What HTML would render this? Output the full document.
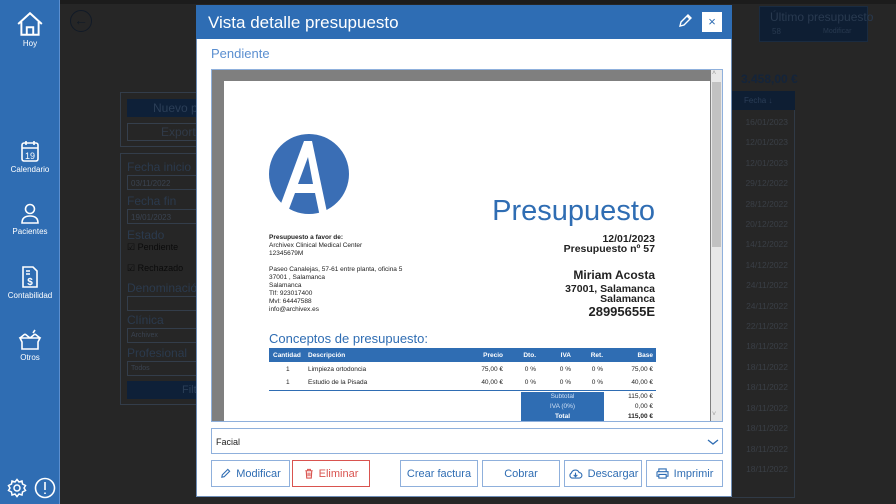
<!DOCTYPE html>
<html><head><meta charset="utf-8"><style>
*{margin:0;padding:0;box-sizing:border-box}
body{width:896px;height:504px;overflow:hidden;background:#262626;font-family:"Liberation Sans",sans-serif;position:relative}
.a{position:absolute;white-space:nowrap}
.side{left:0;top:0;width:60px;height:504px;background:#2f6db3;border-right:1px solid #5b8fd0}
.side .it{position:absolute;left:0;width:60px;text-align:center;color:#fff;font-size:8px}
.dk{color:#2b3a4d}
.btn{position:absolute;top:460px;height:27px;border:1px solid #8fb0dc;color:#2f6db3;font-size:11px;display:flex;align-items:center;justify-content:center;gap:5px;background:#fff}
.doc{font-family:"Liberation Sans",sans-serif;color:#222}
table{border-collapse:collapse}
td{white-space:nowrap}
</style></head><body>
<div class="a" style="left:60px;top:0;width:836px;height:504px;background:#262626;overflow:hidden">
<div class="a" style="left:0;top:0;width:836px;height:4px;background:#1c1c1c"></div>
<div class="a" style="left:10px;top:10px;width:22px;height:22px;border:1.5px solid #111a26;border-radius:50%;color:#111a26;font-size:14px;text-align:center;line-height:19px">←</div>
<div class="a" style="left:60px;top:92px;width:80px;height:55px;border:1px solid #333d4a"></div>
<div class="a" style="left:67px;top:99px;width:73px;height:18px;background:#0e2038;color:#2b3e57;font-size:12px;padding-left:26px;line-height:18px;overflow:hidden">Nuevo pre</div>
<div class="a" style="left:67px;top:123px;width:73px;height:18px;border:1px solid #353f4c;color:#303a48;font-size:12px;padding-left:33px;line-height:16px;overflow:hidden">Exportar</div>
<div class="a" style="left:60px;top:153px;width:80px;height:252px;border:1px solid #333d4a"></div>
<div class="a dk" style="left:67px;top:160px;font-size:12px">Fecha inicio</div>
<div class="a" style="left:67px;top:175px;width:73px;height:15px;border:1px solid #333d4a;color:#3a4350;font-size:8px;padding:3px">03/11/2022</div>
<div class="a dk" style="left:67px;top:194px;font-size:12px">Fecha fin</div>
<div class="a" style="left:67px;top:209px;width:73px;height:15px;border:1px solid #333d4a;color:#3a4350;font-size:8px;padding:3px">19/01/2023</div>
<div class="a dk" style="left:67px;top:228px;font-size:12px">Estado</div>
<div class="a" style="left:67px;top:242px;color:#0b0b0b;font-size:9px">☑ Pendiente</div>
<div class="a" style="left:67px;top:263px;color:#0b0b0b;font-size:9px">☑ Rechazado</div>
<div class="a dk" style="left:67px;top:281px;font-size:12px">Denominación</div>
<div class="a" style="left:67px;top:296px;width:73px;height:15px;border:1px solid #333d4a"></div>
<div class="a dk" style="left:67px;top:313px;font-size:12px">Clínica</div>
<div class="a" style="left:67px;top:328px;width:73px;height:15px;border:1px solid #333d4a;color:#3a4350;font-size:7px;padding:3px">Archivex</div>
<div class="a dk" style="left:67px;top:346px;font-size:12px">Profesional</div>
<div class="a" style="left:67px;top:361px;width:73px;height:15px;border:1px solid #333d4a;color:#3a4350;font-size:7px;padding:3px">Todos</div>
<div class="a" style="left:67px;top:381px;width:73px;height:18px;background:#0e2038;color:#2b3e57;font-size:11px;padding-left:55px;line-height:18px;overflow:hidden">Filtr</div>
<div class="a" style="left:699px;top:6px;width:109px;height:36px;background:#0e1e33;border:1px solid #1a2b40"></div>
<div class="a" style="left:710px;top:10px;color:#293a50;font-size:12px">Último presupuesto</div>
<div class="a" style="left:712px;top:27px;color:#293a50;font-size:8px">58</div>
<div class="a" style="left:763px;top:28px;color:#293a50;font-size:7px">Modificar</div>
<div class="a" style="left:681px;top:72px;color:#14243a;font-size:12px;font-weight:bold">3.458,00 €</div>
<div class="a" style="left:672px;top:91px;width:63px;height:19px;background:#0e1e33;color:#2b3e57;font-size:8px;padding:5px 0 0 12px">Fecha ↓</div>
<div class="a" style="left:672px;top:110px;width:63px;height:388px;border-right:1px solid #303a46;border-bottom:1px solid #303a46"></div>
<div class="a" style="left:672px;top:112px;width:56px;font-size:8.5px;color:#3a3f46;text-align:right;line-height:20.4px">16/01/2023<br>12/01/2023<br>12/01/2023<br>29/12/2022<br>28/12/2022<br>20/12/2022<br>14/12/2022<br>14/12/2022<br>24/11/2022<br>24/11/2022<br>22/11/2022<br>18/11/2022<br>18/11/2022<br>18/11/2022<br>18/11/2022<br>18/11/2022<br>18/11/2022<br>18/11/2022</div>
</div>
<div class="a side">
 <div class="it" style="top:11px"><svg width="28" height="26" viewBox="0 0 26 24" fill="none" stroke="#fff" stroke-width="1.8"><path d="M2 12 L13 2 L24 12 M5 10 V22 H21 V10 M10 22 V15 H16 V22"/></svg><div>Hoy</div></div>
 <div class="it" style="top:139px"><svg width="20" height="24" viewBox="0 0 20 24" fill="none" stroke="#fff" stroke-width="1.6"><rect x="2" y="4" width="16" height="18" rx="2"/><path d="M2 9H18M6 2V6M14 2V6"/><text x="10" y="20" fill="#fff" stroke="none" font-size="9" text-anchor="middle" font-family="Liberation Sans">19</text></svg><div>Calendario</div></div>
 <div class="it" style="top:203px"><svg width="20" height="22" viewBox="0 0 20 22" fill="none" stroke="#fff" stroke-width="1.6"><circle cx="10" cy="6" r="4.5"/><path d="M2 20 Q2 13 10 13 Q18 13 18 20 Z"/></svg><div>Pacientes</div></div>
 <div class="it" style="top:265px"><svg width="18" height="24" viewBox="0 0 18 24" fill="none" stroke="#fff" stroke-width="1.6"><path d="M2 2H12L16 6V22H2Z M5 6H9M5 9H9"/><text x="9" y="20" fill="#fff" stroke="none" font-size="10" text-anchor="middle" font-family="Liberation Sans" font-weight="bold">$</text></svg><div>Contabilidad</div></div>
 <div class="it" style="top:329px"><svg width="26" height="22" viewBox="0 0 26 22" fill="none" stroke="#fff" stroke-width="1.6"><path d="M3 9H23L21 13V20H5V13Z M3 9L8 5M23 9L18 5M8 5L13 9L18 5M16 4L18 1"/></svg><div>Otros</div></div>
 <div class="a" style="left:7px;top:478px"><svg width="20" height="20" viewBox="0 0 20 20" fill="none" stroke="#fff" stroke-width="1.5"><circle cx="10" cy="10" r="3"/><path d="M10 1.5L12 4L15 3L15.5 6L18.5 7.5L17 10L18.5 12.5L15.5 14L15 17L12 16L10 18.5L8 16L5 17L4.5 14L1.5 12.5L3 10L1.5 7.5L4.5 6L5 3L8 4Z"/></svg></div>
 <div class="a" style="left:34px;top:477px"><svg width="22" height="22" viewBox="0 0 22 22" fill="none" stroke="#fff" stroke-width="1.6"><circle cx="11" cy="11" r="9.5"/><path d="M11 5V13M11 15.5V17"/></svg></div>
</div>
<div class="a" style="left:196px;top:5px;width:536px;height:492px;background:#fff;border:1px solid #6f8fb8"></div>
<div class="a" style="left:196px;top:5px;width:536px;height:34px;background:#2e6db4"></div>
<div class="a" style="left:208px;top:13px;color:#fff;font-size:17px;font-family:'Liberation Sans',sans-serif">Vista detalle presupuesto</div>
<div class="a" style="left:677px;top:13px"><svg width="16" height="16" viewBox="0 0 16 16" fill="none" stroke="#fff" stroke-width="1.4"><path d="M3 13L4 9L11 2L14 5L7 12Z M10 3L13 6"/></svg></div>
<div class="a" style="left:702px;top:12px;width:20px;height:20px;background:#fff;color:#2e6db4;font-size:13px;text-align:center;line-height:19px">×</div>
<div class="a" style="left:211px;top:46px;color:#5b8fd0;font-size:13px">Pendiente</div>
<div class="a" style="left:211px;top:69px;width:512px;height:353px;background:#7f7f7f;border:1px solid #8fb0dc"></div>
<div class="a" style="left:711px;top:70px;width:11px;height:351px;background:#e8e8e8"></div>
<div class="a" style="left:712px;top:82px;width:9px;height:165px;background:#c2c2c2"></div>
<div class="a" style="left:712px;top:70px;font-size:7px;color:#999">˄</div>
<div class="a" style="left:712px;top:411px;font-size:7px;color:#999">˅</div>
<div class="a doc" style="left:224px;top:81px;width:486px;height:340px;background:#fff;overflow:hidden">
 <svg class="a" style="left:44px;top:52px" width="82" height="84" viewBox="0 0 82 84"><circle cx="41" cy="41" r="40" fill="#3a6eb5"/><path fill="#fff" fill-rule="evenodd" d="M8 84 L36 8 L44 8 L60 84 L52 84 L47 60 L27 60 L18 84Z M30 51 L45 51 L40 24Z"/></svg>
 <div class="a" style="right:55px;top:114px;font-size:29px;color:#2f6db3">Presupuesto</div>
 <div class="a" style="left:45px;top:153px;font-size:6.5px;line-height:8px"><b>Presupuesto a favor de:</b><br>Archivex Clinical Medical Center<br>12345679M<br><br>Paseo Canalejas, 57-61 entre planta, oficina 5<br>37001 , Salamanca<br>Salamanca<br>Tlf: 923017400<br>Mvl: 64447588<br>info@archivex.es</div>
 <div class="a" style="right:55px;top:153px;font-size:10.5px;font-weight:bold;text-align:right;line-height:10px">12/01/2023<br>Presupuesto nº 57</div>
 <div class="a" style="right:55px;top:188px;font-size:12px;font-weight:bold;text-align:right;line-height:12px">Miriam Acosta</div>
 <div class="a" style="right:55px;top:203px;font-size:10.5px;font-weight:bold;text-align:right;line-height:10px">37001, Salamanca<br>Salamanca</div>
 <div class="a" style="right:55px;top:223px;font-size:13px;font-weight:bold;text-align:right">28995655E</div>
 <div class="a" style="left:45px;top:250px;font-size:13px;color:#2f6db3">Conceptos de presupuesto:</div>
 <table class="a" style="left:45px;top:267px;width:387px;font-size:6.5px;table-layout:fixed">
  <colgroup><col style="width:39px"><col style="width:133px"><col style="width:62px"><col style="width:33px"><col style="width:35px"><col style="width:32px"><col style="width:53px"></colgroup>
  <tr style="background:#2f6db3;color:#fff;font-weight:bold;height:14px"><td style="padding-left:4px">Cantidad</td><td>Descripción</td><td style="text-align:right">Precio</td><td style="text-align:right">Dto.</td><td style="text-align:right">IVA</td><td style="text-align:right">Ret.</td><td style="text-align:right;padding-right:3px">Base</td></tr>
  <tr style="height:14px"><td style="padding-left:17px">1</td><td>Limpieza ortodoncia</td><td style="text-align:right">75,00 €</td><td style="text-align:right">0 %</td><td style="text-align:right">0 %</td><td style="text-align:right">0 %</td><td style="text-align:right;padding-right:3px">75,00 €</td></tr>
  <tr style="height:14px;border-bottom:1.5px solid #2f6db3"><td style="padding-left:17px">1</td><td>Estudio de la Pisada</td><td style="text-align:right">40,00 €</td><td style="text-align:right">0 %</td><td style="text-align:right">0 %</td><td style="text-align:right">0 %</td><td style="text-align:right;padding-right:3px">40,00 €</td></tr>
 </table>
 <div class="a" style="left:297px;top:311px;width:83px;height:30px;background:#2f6db3;color:#cfe0f5;font-size:6.5px;text-align:center;line-height:10px">Subtotal<br>IVA (0%)<br><b style="color:#fff">Total</b></div>
 <div class="a" style="left:380px;top:311px;width:52px;font-size:6.5px;text-align:right;line-height:10px;padding-right:3px">115,00 €<br>0,00 €<br><b>115,00 €</b></div>
</div>
<div class="a" style="left:211px;top:428px;width:512px;height:26px;border:1px solid #8fb0dc;font-size:9px;color:#222;padding:8px 0 0 4px">Facial</div>
<div class="a" style="left:707px;top:433px"><svg width="12" height="8" viewBox="0 0 12 8" fill="none" stroke="#2f6db3" stroke-width="1.3"><path d="M1 2L6 6L11 2"/></svg></div>
<div class="btn" style="left:211px;width:79px"><svg width="11" height="11" viewBox="0 0 12 12" fill="none" stroke="#2f6db3" stroke-width="1.2"><path d="M2 10L2.5 7.5L8.5 1.5L10.5 3.5L4.5 9.5Z"/></svg>Modificar</div>
<div class="btn" style="left:292px;width:78px;border-color:#d9534f;color:#d9534f"><svg width="10" height="11" viewBox="0 0 10 12" fill="none" stroke="#d9534f" stroke-width="1.2"><path d="M1 3H9M3.5 3V1.5H6.5V3M2 3L2.5 11H7.5L8 3M4 5V9M6 5V9"/></svg>Eliminar</div>
<div class="btn" style="left:400px;width:78px">Crear factura</div>
<div class="btn" style="left:482px;width:78px">Cobrar</div>
<div class="btn" style="left:564px;width:78px"><svg width="15" height="11" viewBox="0 0 16 12" fill="none" stroke="#2f6db3" stroke-width="1.2"><path d="M4 11H12A3 3 0 0 0 12 5A4.5 4.5 0 0 0 3.5 5.5A3 3 0 0 0 4 11Z M8 5V9M6 7.5L8 9.5L10 7.5"/></svg>Descargar</div>
<div class="btn" style="left:646px;width:77px"><svg width="13" height="11" viewBox="0 0 14 12" fill="none" stroke="#2f6db3" stroke-width="1.2"><path d="M3 4V1H11V4M1 4H13V9H11M3 9H1V4M3 7H11V11H3Z"/></svg>Imprimir</div>
</body></html>
